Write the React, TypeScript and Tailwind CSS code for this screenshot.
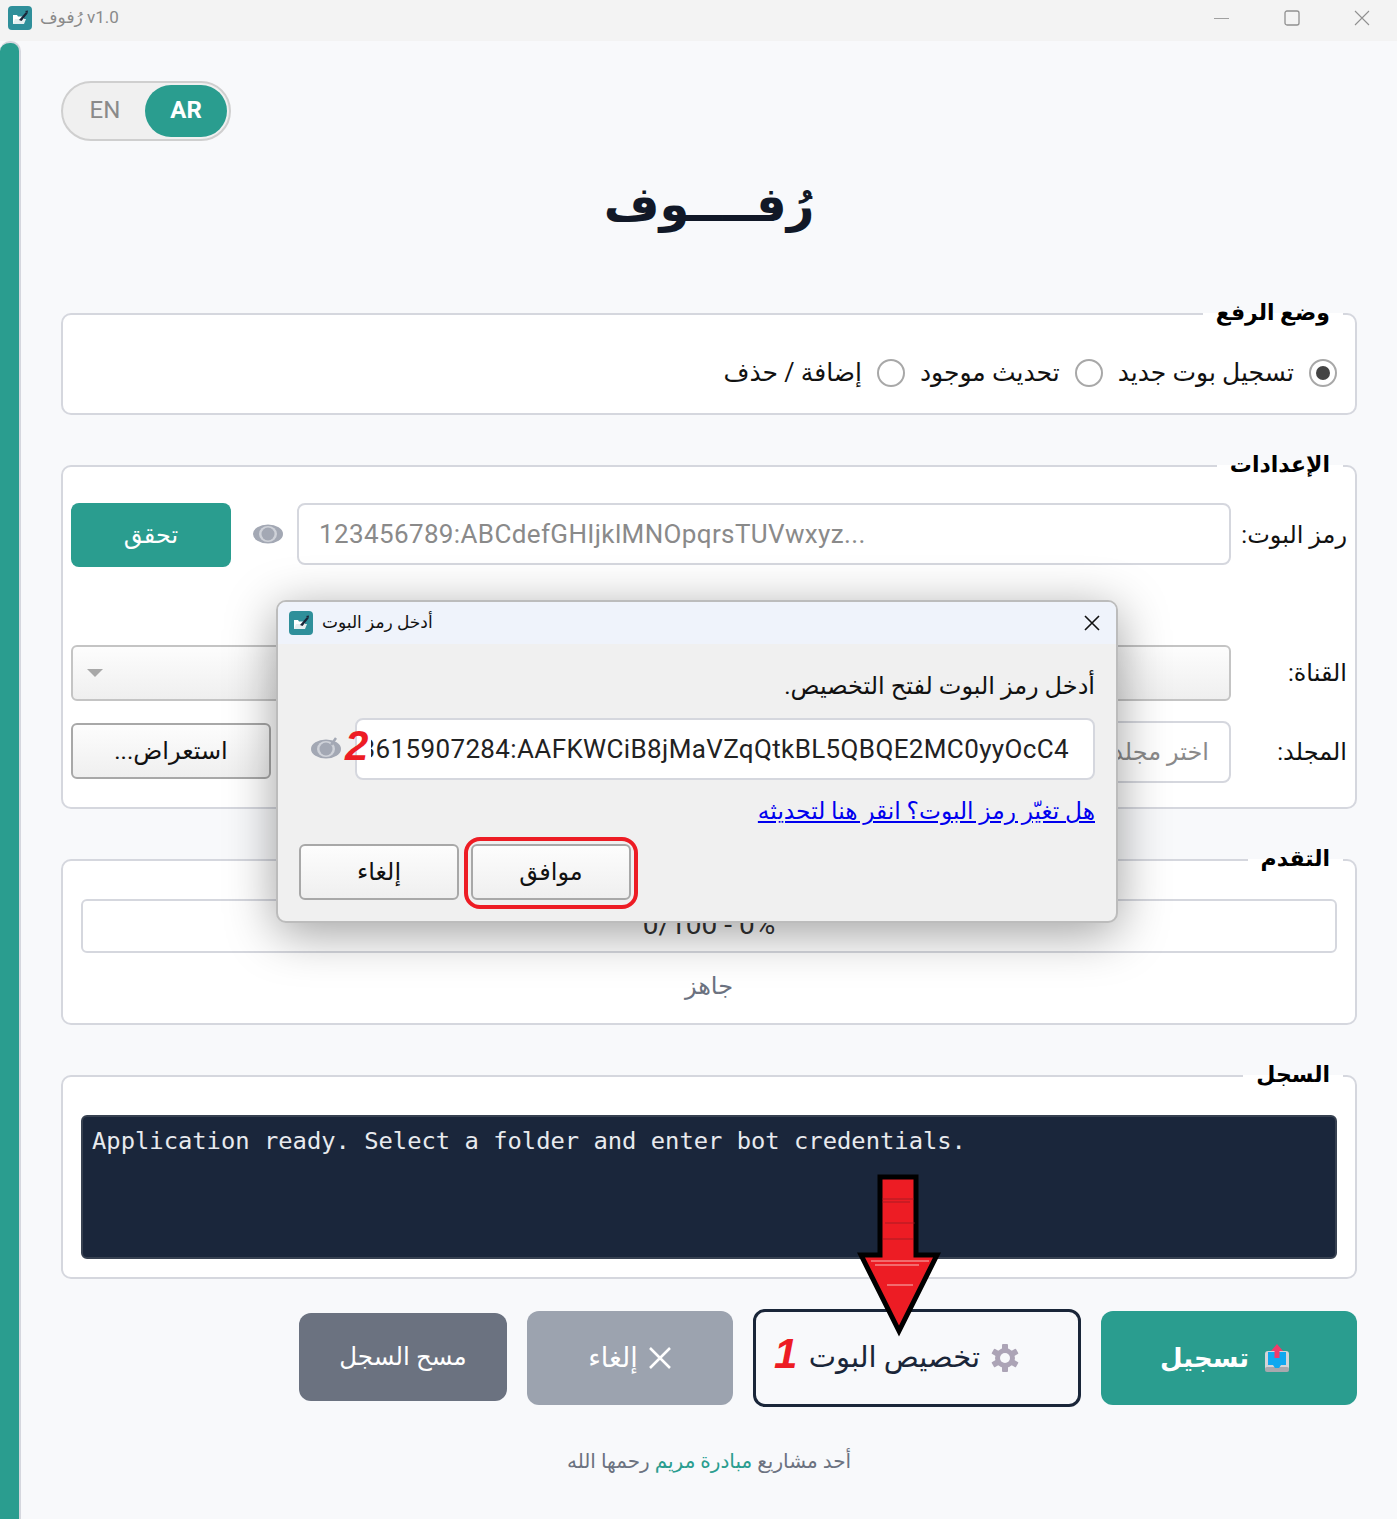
import React from 'react';

const Logo = ({ size = 24 }: { size?: number }) => (
  <svg width={size} height={size} viewBox="0 0 24 24" className="shrink-0">
    <rect width="24" height="24" rx="4" fill="#2f8f9a" />
    <path d="M5 9h4l1 1.500h6V18H5z" fill="#fff" />
    <path d="M5 18l2-5h11l-2 5z" fill="#e6eef0" />
    <path d="M11 14l7-8 1.500 1.500-6 7.500z" fill="#1a2639" />
    <path d="M17 5l3-.5-.5 3z" fill="#1a2639" />
  </svg>
);

const Eye = ({ slashed }: { slashed?: boolean }) => (
  <svg width="30" height="24" viewBox="0 0 30 24" className="shrink-0">
    <ellipse cx="15" cy="12" rx="15" ry="9.500" fill="#a3a8b4" />
    <ellipse cx="15" cy="12" rx="9" ry="8" fill="#cfd2d9" />
    <circle cx="15" cy="12" r="6.500" fill="#a3a8b4" />
    {slashed && <path d="M25 1L20 8" stroke="#a3a8b4" strokeWidth="2.500" />}
  </svg>
);

const Gear = () => (
  <svg width="30" height="30" viewBox="0 0 30 30" className="shrink-0">
    <g fill="#aca4b6">
      <circle cx="15" cy="15" r="10" />
      <rect x="12" y="1" width="6" height="28" rx="1" />
      <rect x="12" y="1" width="6" height="28" rx="1" transform="rotate(60 15 15)" />
      <rect x="12" y="1" width="6" height="28" rx="1" transform="rotate(120 15 15)" />
    </g>
    <circle cx="15" cy="15" r="5" fill="#f8f9fb" />
  </svg>
);

const UploadTray = () => (
  <svg width="26" height="30" viewBox="0 0 26 30" className="shrink-0">
    <rect x="1" y="8" width="24" height="20" rx="3" fill="#d4d4d8" />
    <rect x="1" y="24" width="24" height="5" rx="2" fill="#a8a8ae" />
    <path d="M4 9h18v13h-5l-2 3h-4l-2-3H4z" fill="#10a8f0" />
    <path d="M13 1l6 7h-3.500v7h-5V8H7z" fill="#f03a6a" />
  </svg>
);

const Radio = ({ checked }: { checked?: boolean }) => (
  <span className="flex h-[28px] w-[28px] shrink-0 items-center justify-center rounded-full border-2 border-[#a8a8a8] bg-white">
    {checked && <span className="h-[14px] w-[14px] rounded-full bg-[#444]" />}
  </span>
);

const Group = ({ title, className, children }: { title: string; className: string; children: React.ReactNode }) => (
  <section className={`relative rounded-[10px] border-2 border-[#d5d7de] bg-white ${className}`}>
    <h2 className="absolute right-[12px] top-[-20px] bg-[linear-gradient(to_bottom,#f8f9fb_50%,#ffffff_50%)] px-[13px] text-[22px] font-bold leading-[36px] text-black">
      {title}
    </h2>
    {children}
  </section>
);

const App = () => {
  return (
    <div dir="ltr" className="relative flex h-[1519px] w-full flex-col overflow-hidden bg-[#f8f9fb] font-['Roboto','DejaVu_Sans',sans-serif] text-[#1a2639]">
      {/* Title bar */}
      <header className="flex h-[41px] shrink-0 items-center bg-[#f3f3f3] pb-[5px] pl-[8px]">
        <Logo />
        <span className="ml-[8px] text-[17px] text-[#8a8a8a]">رُفوف v1.0</span>
        <div className="ml-auto flex items-center text-[#8f8f8f]">
          <svg width="16" height="16" viewBox="0 0 16 16" className="mr-[54px]"><path d="M0 8.500h15" stroke="#a0a0a0" /></svg>
          <svg width="16" height="16" viewBox="0 0 16 16" className="mr-[54px]"><rect x="1" y="1" width="14" height="14" rx="2" fill="none" stroke="#909090" strokeWidth="1.300" /></svg>
          <svg width="16" height="16" viewBox="0 0 16 16" className="mr-[27px]"><path d="M1 1l14 14M15 1L1 15" stroke="#909090" strokeWidth="1.100" /></svg>
        </div>
      </header>

      <div className="flex flex-1">
        <div className="w-[21px] shrink-0 rounded-t-[10px] border-r-2 border-t-2 border-[#d5d7de] bg-[#2a9d8f]" />

        <main className="flex-1 pl-[40px] pr-[40px]">
          {/* Language toggle */}
          <div className="mt-[40px] flex h-[60px] w-[170px] items-center rounded-full border-2 border-[#cfcfcf] bg-[#f0f0f0] pl-[2px] pr-[2px]">
            <span className="flex-1 pb-[2px] text-center text-[24px] text-[#8a8a8a]">EN</span>
            <span className="flex h-[52px] w-[82px] items-center justify-center rounded-[26px] bg-[#2a9d8f] pb-[2px] text-[24px] font-bold text-white">AR</span>
          </div>

          <h1 dir="rtl" className="mt-[21px] h-[86px] text-center text-[48px] font-bold leading-[86px] text-[#111827]">رُفــــوف</h1>

          <div dir="rtl" className="mt-[65px] flex flex-col">
            <Group title="وضع الرفع" className="h-[102px]">
              <div className="flex h-full items-center gap-[15px] pr-[18px] pt-[18px] text-[25px] text-[#111]">
                <Radio checked />
                <span>تسجيل بوت جديد</span>
                <Radio />
                <span>تحديث موجود</span>
                <Radio />
                <span>إضافة / حذف</span>
              </div>
            </Group>

            <Group title="الإعدادات" className="mt-[50px] h-[344px]">
              <div className="flex flex-col pl-[8px] pr-[8px] pt-[36px]">
                <div className="flex h-[64px] items-start">
                  <span className="mt-[14px] w-[116px] shrink-0 whitespace-nowrap text-[24px] text-[#111]">رمز البوت:</span>
                  <div dir="ltr" className="flex h-[62px] flex-1 items-center rounded-[8px] border-2 border-[#d5d7de] bg-white pl-[20px] text-[26px] tracking-[0.37px] text-[#8a8a8a]">
                    123456789:ABCdefGHIjklMNOpqrsTUVwxyz...
                  </div>
                  <div className="flex h-[62px] w-[66px] shrink-0 items-center justify-start pr-[14px]"><Eye /></div>
                  <button className="h-[64px] w-[160px] shrink-0 rounded-[8px] bg-[#2a9d8f] text-[24px] text-white">تحقق</button>
                </div>
                <div className="mt-[78px] flex h-[56px] items-center">
                  <span className="w-[116px] shrink-0 text-[24px] text-[#111]">القناة:</span>
                  <div className="flex h-[56px] flex-1 items-center justify-end rounded-[6px] border-2 border-[#c4c4c4] bg-gradient-to-b from-[#fdfdfd] to-[#efefef] pl-[14px]">
                    <span className="h-0 w-0 border-x-[8px] border-t-[8px] border-x-transparent border-t-[#a8a8a8]" />
                  </div>
                </div>
                <div className="mt-[20px] flex h-[62px] items-center">
                  <span className="w-[116px] shrink-0 text-[24px] text-[#111]">المجلد:</span>
                  <div className="flex h-[62px] flex-1 items-center rounded-[8px] border-2 border-[#d5d7de] bg-white pr-[20px] text-[24px] text-[#8a8a8a]">اختر مجلداً</div>
                  <button className="mb-[2px] mr-[14px] h-[56px] w-[200px] shrink-0 rounded-[6px] border-2 border-[#a8a8a8] bg-gradient-to-b from-[#fdfdfd] to-[#efefef] text-[24px] text-[#111]">استعراض...</button>
                </div>
              </div>
            </Group>

            <Group title="التقدم" className="mt-[50px] h-[166px]">
              <div className="flex flex-col px-[18px] pt-[38px]">
                <div className="flex h-[54px] items-center justify-center rounded-[6px] border-2 border-[#d5d7de] bg-white pb-[3px] text-[28px] text-[#333]" dir="ltr">0/100 - 0%</div>
                <p className="mt-[15px] text-center text-[24px] text-[#6b7280]">جاهز</p>
              </div>
            </Group>

            <Group title="السجل" className="mt-[50px] h-[204px]">
              <div className="px-[18px] pt-[38px]">
                <div dir="ltr" className="h-[144px] rounded-[6px] border-2 border-[#374151] bg-[#1a263b] px-[9px] py-[7px] font-['DejaVu_Sans_Mono',monospace] text-[23.800px] leading-[34px] text-[#e8eaee]">
                  Application ready. Select a folder and enter bot credentials.
                </div>
              </div>
            </Group>

            {/* Action buttons */}
            <div className="mt-[30px] flex items-center">
              <button className="flex h-[94px] w-[256px] items-center justify-center gap-[15px] rounded-[12px] bg-[#2a9d8f] pr-[8px] text-[26px] font-bold text-white">
                <UploadTray />
                <span>تسجيل</span>
              </button>
              <button className="mr-[20px] flex h-[98px] w-[328px] items-center gap-[10px] rounded-[12px] border-[3px] border-[#1a2639] bg-[#f8f9fb] pr-[58px] text-[29px] text-[#1a2639]">
                <Gear />
                <span>تخصيص البوت</span>
              </button>
              <button className="mr-[20px] flex h-[94px] w-[206px] items-center justify-center gap-[10px] rounded-[12px] bg-[#9ca3af] text-[27px] text-white">
                <svg width="24" height="24" viewBox="0 0 24 24"><path d="M2 2l20 20M22 2L2 22" stroke="#fff" strokeWidth="2.500" /></svg>
                <span>إلغاء</span>
              </button>
              <button className="mb-[2px] mr-[20px] h-[88px] w-[208px] rounded-[12px] bg-[#6b7280] text-[24.500px] text-white">مسح السجل</button>
            </div>

            <p className="mt-[39px] text-center text-[20px] text-[#6b7280]">
              أحد مشاريع <span className="text-[#2a9d8f]">مبادرة مريم</span> رحمها الله
            </p>
          </div>
        </main>
      </div>

      {/* Modal dialog */}
      <div dir="rtl" className="absolute left-[276px] top-[600px] flex h-[323px] w-[842px] flex-col overflow-hidden rounded-[10px] border-2 border-[#bcbcbc] bg-[#f0f0f0] shadow-[0_10px_50px_rgba(0,0,0,0.38)]">
        <div dir="ltr" className="flex h-[42px] shrink-0 items-center bg-[#eff3fb] pl-[11px] pr-[15px]">
          <Logo />
          <span dir="rtl" className="ml-[9px] text-[17px] text-[#111]">أدخل رمز البوت</span>
          <svg width="18" height="18" viewBox="0 0 18 18" className="ml-auto"><path d="M2 2l14 14M16 2L2 16" stroke="#111" strokeWidth="1.600" /></svg>
        </div>
        <div className="flex flex-1 flex-col pl-[21px] pr-[21px]">
          <p className="mt-[24px] text-[24px] leading-[36px] text-[#111]">أدخل رمز البوت لفتح التخصيص.</p>
          <div className="mt-[14px] flex items-center">
            <div dir="ltr" className="flex h-[62px] w-[740px] shrink-0 items-center justify-end overflow-hidden rounded-[8px] border-2 border-[#d5d7de] bg-white pl-[14px] pr-[24px] text-[26px] tracking-[0.37px] text-[#222]">
              <span className="overflow-hidden whitespace-nowrap" dir="rtl"><span dir="ltr">3615907284:AAFKWCiB8jMaVZqQtkBL5QBQE2MC0yyOcC4</span></span>
            </div>
            <div className="mr-[14px]"><Eye slashed /></div>
          </div>
          <a className="mt-[12px] text-[23.300px] leading-[38px] text-[#0000ee] underline">هل تغيّر رمز البوت؟ انقر هنا لتحديثه</a>
          <div dir="ltr" className="mt-[14px] flex gap-[12px]">
            <button className="h-[56px] w-[160px] rounded-[6px] border-2 border-[#a8a8a8] bg-gradient-to-b from-[#fdfdfd] to-[#efefef] text-[24px] text-[#111]">إلغاء</button>
            <button className="h-[56px] w-[160px] rounded-[6px] border-2 border-[#a8a8a8] bg-gradient-to-b from-[#fdfdfd] to-[#efefef] text-[24px] text-[#111]">موافق</button>
          </div>
        </div>
      </div>

      {/* Annotations laid over the screenshot */}
      <div className="absolute left-[464px] top-[837px] h-[72px] w-[174px] rounded-[16px] border-[4px] border-[#ed1c24]" />
      <span className="absolute left-[345px] top-[724px] font-['Liberation_Sans',sans-serif] text-[42px] font-bold italic leading-[44px] text-[#ed1c24]">2</span>
      <span className="absolute left-[774px] top-[1332px] font-['Liberation_Sans',sans-serif] text-[42px] font-bold italic leading-[44px] text-[#ed1c24]">1</span>
      <svg width="84" height="164" viewBox="0 0 84 164" className="absolute left-[857px] top-[1173px]">
        <path d="M23 4h36v78h21L42 158 4 82h19z" fill="#ed1c24" stroke="#000" strokeWidth="5" />
        <path d="M25 26h32M25 29h28M28 50h30M26 66h30" stroke="#8f1a22" strokeWidth="1" opacity="0.7" />
        <path d="M14 88h58M18 92h44M30 112h26" stroke="#f6a0a0" strokeWidth="1.500" opacity="0.8" />
      </svg>
    </div>
  );
};

export default App;
